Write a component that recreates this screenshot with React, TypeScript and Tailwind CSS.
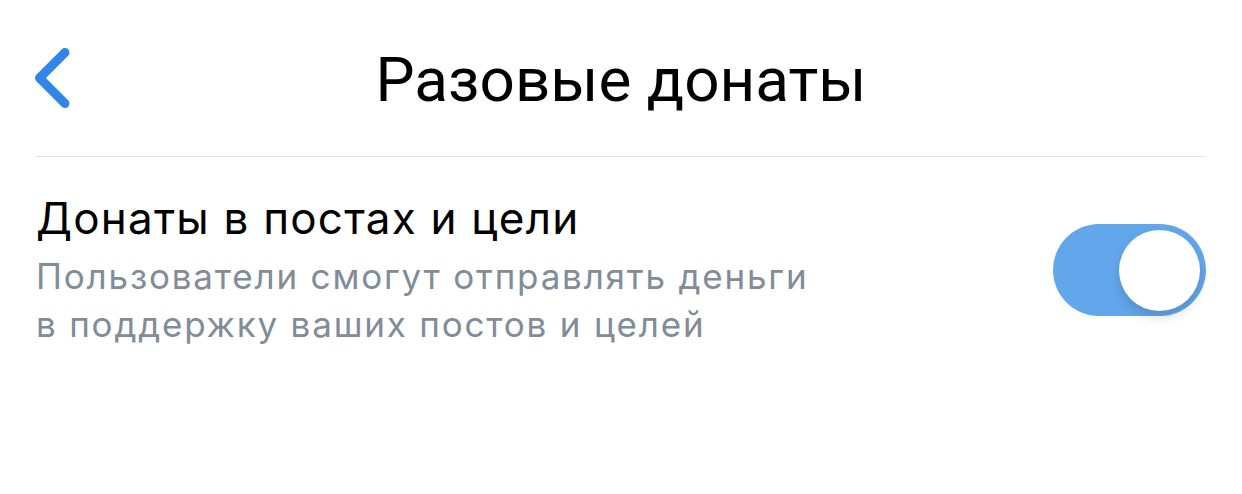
import React from 'react';

// Back chevron used in the navigation bar
const BackIcon = () => (
  <svg width="40" height="64" viewBox="0 0 40 64" fill="none">
    <path
      d="M31 5.5 L5.5 31 L31 56.5"
      stroke="#2f86e6"
      strokeWidth="9"
      strokeLinecap="round"
      strokeLinejoin="round"
    />
  </svg>
);

const Toggle = ({ checked }: { checked: boolean }) => (
  <div
    className={`w-[153px] h-[92px] rounded-full p-[6px] flex items-center ${
      checked ? 'bg-[#62a7ec] justify-end' : 'bg-[#e6e7eb] justify-start'
    }`}
  >
    <div className="w-[81px] h-[81px] rounded-full bg-white shadow-[0_6px_12px_rgba(0,0,0,0.15)]" />
  </div>
);

export default function App() {
  return (
    <div className="w-full h-[494px] bg-white font-['Inter',sans-serif]">
      <header className="h-[156px] px-[34px] grid grid-cols-[1fr_auto_1fr] items-center">
        <button className="justify-self-start pt-[2px]" aria-label="Назад">
          <BackIcon />
        </button>
        <h1 className="font-['Roboto',sans-serif] text-[62px] leading-none text-black pt-[4px]">
          Разовые донаты
        </h1>
        <div />
      </header>

      <div className="mx-[36px] h-px bg-[#e1e2e5]" />

      <div className="px-[36px] pt-[35px] flex items-center justify-between">
        <div>
          <div className="text-[44px] leading-[52px] tracking-[1.2px] text-black">
            Донаты в постах и цели
          </div>
          <div className="mt-[8px] text-[35px] leading-[48px] tracking-[1.8px] text-[#818c99]">
            Пользователи смогут отправлять деньги
            <br />в поддержку ваших постов и целей
          </div>
        </div>
        <Toggle checked />
      </div>
    </div>
  );
}
